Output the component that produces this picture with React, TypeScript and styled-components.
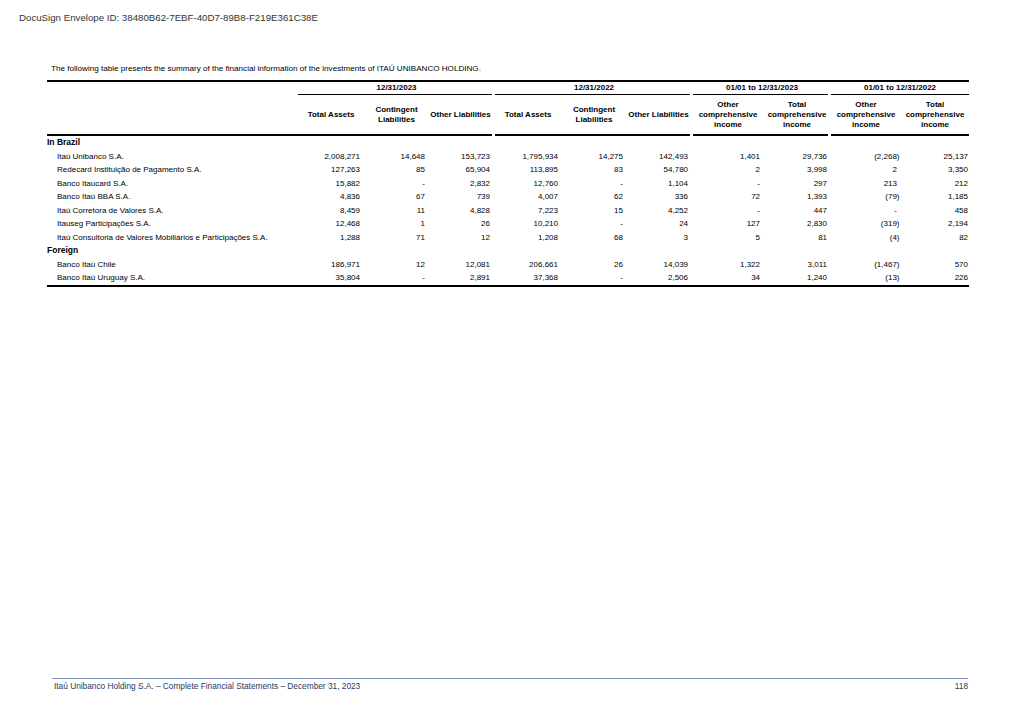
import React from 'react';
import styled, { createGlobalStyle } from 'styled-components';

const Global = createGlobalStyle`
  html, body { margin: 0; padding: 0; background: #fff; }
  body { font-family: "Liberation Sans", Arial, sans-serif; color: #000; }
`;

const Page = styled.div`
  width: 1019px;
  height: 720px;
  display: flex;
  flex-direction: column;
  box-sizing: border-box;
  overflow: hidden;
`;

const Envelope = styled.div`
  font-size: 9.7px;
  line-height: 12px;
  color: #333;
  padding: 12px 0 0 19px;
`;

const Content = styled.main`
  padding-left: 47px;
`;

const Intro = styled.p`
  margin: 40px 0 0 4px;
  font-size: 8.1px;
  line-height: 10px;
`;

const Table = styled.table`
  border-collapse: collapse;
  table-layout: fixed;
  width: 922px;
  margin-top: 6px;
  border-top: 2px solid #000;
  font-size: 8px;
`;

const GroupTh = styled.th`
  height: 12px;
  padding: 0;
  font-weight: bold;
  text-align: center;
  line-height: 12px;
`;

const RuleCell = styled.td<{ $h: number }>`
  padding: 0;
  height: ${(p) => p.$h}px;
`;

const Rule = styled.div<{ $h: number; $gap: number }>`
  height: ${(p) => p.$h}px;
  background: #000;
  margin-right: ${(p) => p.$gap}px;
`;

const ColTh = styled.th<{ $pr: number }>`
  height: 38px;
  padding: 1px ${(p) => p.$pr}px 0 0;
  font-weight: bold;
  line-height: 10px;
  text-align: center;
  vertical-align: middle;
`;

const SectionTd = styled.td`
  height: 13.5px;
  padding: 0;
  font-weight: bold;
  font-size: 8.5px;
  line-height: 13.5px;
  white-space: nowrap;
`;

const NameTd = styled.td`
  height: 13.5px;
  padding: 0 0 0 10px;
  line-height: 13.5px;
  white-space: nowrap;
`;

const NumTd = styled.td<{ $pr: number }>`
  height: 13.5px;
  padding: 0 ${(p) => p.$pr}px 0 0;
  line-height: 13.5px;
  text-align: right;
  white-space: nowrap;
`;

const Paren = styled.span<{ $neg: boolean }>`
  display: inline-block;
  padding-right: ${(p) => (p.$neg ? 0 : 2.5)}px;
`;

const BottomRule = styled.td`
  padding: 0;
  height: 2px;
  background: #000;
`;

const Footer = styled.footer`
  margin: auto 51px 0 52px;
  height: 39px;
  border-top: 1px solid #7f97bd;
  display: flex;
  justify-content: space-between;
  padding: 2px 0 0 2px;
  font-size: 8.3px;
  line-height: 10px;
  color: #1f3864;
`;

const widths = [251, 66, 65, 66, 66, 66, 66, 70, 68, 70, 68];
const pads = [4, 4, 5, 3, 4, 5, 3, 4, 1.5, 1];

const groups = [
  { label: '12/31/2023', span: 3 },
  { label: '12/31/2022', span: 3 },
  { label: '01/01 to 12/31/2023', span: 2 },
  { label: '01/01 to 12/31/2022', span: 2 },
];

const headers: string[][] = [
  ['Total Assets'],
  ['Contingent', 'Liabilities'],
  ['Other Liabilities'],
  ['Total Assets'],
  ['Contingent', 'Liabilities'],
  ['Other Liabilities'],
  ['Other', 'comprehensive', 'income'],
  ['Total', 'comprehensive', 'income'],
  ['Other', 'comprehensive', 'income'],
  ['Total', 'comprehensive', 'income'],
];

type Row = { section?: string; name?: string; values?: string[] };

const rows: Row[] = [
  { section: 'In Brazil' },
  { name: 'Itaú Unibanco S.A.', values: ['2,008,271', '14,648', '153,723', '1,795,934', '14,275', '142,493', '1,401', '29,736', '(2,268)', '25,137'] },
  { name: 'Redecard Instituição de Pagamento S.A.', values: ['127,263', '85', '65,904', '113,895', '83', '54,780', '2', '3,998', '2', '3,350'] },
  { name: 'Banco Itaucard S.A.', values: ['15,882', '-', '2,832', '12,760', '-', '1,104', '-', '297', '213', '212'] },
  { name: 'Banco Itaú BBA S.A.', values: ['4,836', '67', '739', '4,007', '62', '336', '72', '1,393', '(79)', '1,185'] },
  { name: 'Itaú Corretora de Valores S.A.', values: ['8,459', '11', '4,828', '7,223', '15', '4,252', '-', '447', '-', '458'] },
  { name: 'Itauseg Participações S.A.', values: ['12,468', '1', '26', '10,210', '-', '24', '127', '2,830', '(319)', '2,194'] },
  { name: 'Itaú Consultoria de Valores Mobiliários e Participações S.A.', values: ['1,288', '71', '12', '1,208', '68', '3', '5', '81', '(4)', '82'] },
  { section: 'Foreign' },
  { name: 'Banco Itaú Chile', values: ['186,971', '12', '12,081', '206,661', '26', '14,039', '1,322', '3,011', '(1,467)', '570'] },
  { name: 'Banco Itaú Uruguay S.A.', values: ['35,804', '-', '2,891', '37,368', '-', '2,506', '34', '1,240', '(13)', '226'] },
];

export default function App() {
  return (
    <Page>
      <Global />
      <Envelope>DocuSign Envelope ID: 38480B62-7EBF-40D7-89B8-F219E361C38E</Envelope>
      <Content>
        <Intro>
          The following table presents the summary of the financial information of the investments of ITAÚ UNIBANCO HOLDING.
        </Intro>
        <Table>
          <colgroup>
            {widths.map((w, i) => (
              <col key={i} style={{ width: w }} />
            ))}
          </colgroup>
          <thead>
            <tr>
              <GroupTh />
              {groups.map((g) => (
                <GroupTh key={g.label} colSpan={g.span}>
                  {g.label}
                </GroupTh>
              ))}
            </tr>
            <tr>
              <RuleCell $h={1} />
              {groups.map((g, i) => (
                <RuleCell key={g.label} $h={1} colSpan={g.span}>
                  <Rule $h={1} $gap={i === 3 ? 0 : 3} />
                </RuleCell>
              ))}
            </tr>
            <tr>
              <ColTh $pr={0} />
              {headers.map((h, i) => (
                <ColTh key={i} $pr={i === 2 || i === 5 ? 3 : 0}>
                  {h.map((line, j) => (
                    <React.Fragment key={j}>
                      {j > 0 && <br />}
                      {line}
                    </React.Fragment>
                  ))}
                </ColTh>
              ))}
            </tr>
            <tr>
              <RuleCell $h={2}>
                <Rule $h={2} $gap={0} />
              </RuleCell>
              {groups.map((g, i) => (
                <RuleCell key={g.label} $h={2} colSpan={g.span}>
                  <Rule $h={2} $gap={i === 3 ? 0 : 3} />
                </RuleCell>
              ))}
            </tr>
          </thead>
          <tbody>
            {rows.map((r, i) =>
              r.section ? (
                <tr key={i}>
                  <SectionTd colSpan={11}>{r.section}</SectionTd>
                </tr>
              ) : (
                <tr key={i}>
                  <NameTd>{r.name}</NameTd>
                  {r.values!.map((v, j) => {
                    const neg = v.startsWith('(');
                    return (
                      <NumTd key={j} $pr={pads[j]}>
                        {j === 8 ? <Paren $neg={neg}>{v}</Paren> : v}
                      </NumTd>
                    );
                  })}
                </tr>
              )
            )}
            <tr>
              <BottomRule colSpan={11} />
            </tr>
          </tbody>
        </Table>
      </Content>
      <Footer>
        <span>Itaú Unibanco Holding S.A. – Complete Financial Statements – December 31, 2023</span>
        <span>118</span>
      </Footer>
    </Page>
  );
}
